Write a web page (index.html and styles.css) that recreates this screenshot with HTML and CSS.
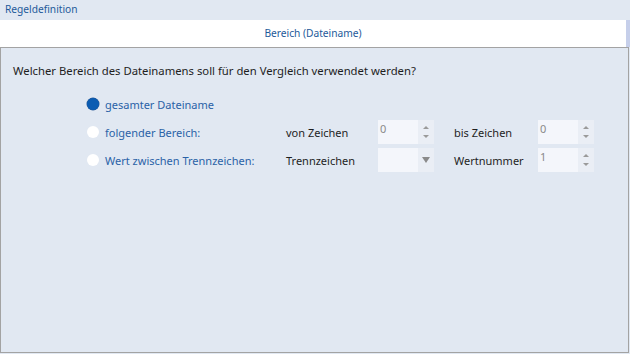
FILE: index.html
```html
<!DOCTYPE html>
<html lang="de">
<head>
  <meta charset="UTF-8">
  <title>Regeldefinition</title>
  <link rel="stylesheet" href="styles.css">
</head>
<body>
  <div class="window">
    <!-- Header -->
    <div class="header">Regeldefinition</div>

    <!-- Tab bar -->
    <div class="tab-bar">
      <div class="tab">Bereich (Dateiname)</div>
      <div class="tab-strip"></div>
    </div>

    <!-- Panel -->
    <div class="panel">
      <p class="question">Welcher Bereich des Dateinamens soll für den Vergleich verwendet werden?</p>

      <div class="options">
        <label class="option">
          <span class="radio checked"></span>
          gesamter Dateiname
        </label>
        <span></span><span></span><span></span><span></span>

        <label class="option">
          <span class="radio"></span>
          folgender Bereich:
        </label>
        <span class="field-label">von Zeichen</span>
        <div class="spinner">
          <span class="value">0</span>
          <span class="spin-buttons"><span class="arrow-up"></span><span class="arrow-down"></span></span>
        </div>
        <span class="field-label">bis Zeichen</span>
        <div class="spinner">
          <span class="value">0</span>
          <span class="spin-buttons"><span class="arrow-up"></span><span class="arrow-down"></span></span>
        </div>

        <label class="option">
          <span class="radio"></span>
          Wert zwischen Trennzeichen:
        </label>
        <span class="field-label">Trennzeichen</span>
        <div class="spinner">
          <span class="value"></span>
          <span class="combo-button"><span class="arrow-combo"></span></span>
        </div>
        <span class="field-label">Wertnummer</span>
        <div class="spinner">
          <span class="value">1</span>
          <span class="spin-buttons"><span class="arrow-up"></span><span class="arrow-down"></span></span>
        </div>
      </div>
    </div>
  </div>
</body>
</html>
```

FILE: styles.css
```css
* {
  box-sizing: border-box;
  margin: 0;
  padding: 0;
}

body {
  font-family: 'Noto Sans', 'Open Sans', sans-serif;
  font-size: 11px;
  background-color: #e1e8f2;
  color: #1e1e1e;
  width: 630px;
  height: 354px;
  overflow: hidden;
}

.window {
  display: flex;
  flex-direction: column;
  height: 354px;
}

.header {
  height: 20px;
  line-height: 19px;
  padding-left: 5px;
  font-size: 10.2px;
  color: #1e5a9a;
}

.tab-bar {
  display: flex;
  height: 27px;
}

.tab {
  flex: 1;
  background-color: #ffffff;
  text-align: center;
  line-height: 27px;
  font-size: 10.2px;
  color: #1e5a9a;
}

.tab-strip {
  width: 4px;
  background-color: #c6cfea;
}

.panel {
  width: 629px;
  height: 306px;
  border: 1px solid #a3a3a3;
  background-color: #e1e8f2;
  padding: 15px 0 0 12px;
}

.question {
  font-size: 11.3px;
  line-height: 16px;
  margin-bottom: 13px;
}

.options {
  display: grid;
  grid-template-columns: 199px 92px 76px 84px 56px;
  grid-auto-rows: 24px;
  row-gap: 4px;
  margin-left: 74px;
  align-items: center;
}

.option {
  display: flex;
  align-items: center;
  gap: 6px;
  color: #2a62a7;
}

.radio {
  width: 12px;
  height: 12px;
  border-radius: 50%;
  background-color: #ffffff;
}

.radio.checked {
  background-color: #0b5cb2;
  box-shadow: 0 0 0 0.5px #2a5a95;
}

.field-label {
  color: #1e1e1e;
}

.spinner {
  display: flex;
  width: 56px;
  height: 24px;
  background-color: #f4f6fb;
}

.spinner .value {
  flex: 1;
  padding: 1px 0 0 2px;
  color: #8a8a8a;
  line-height: 16px;
}

.spin-buttons,
.combo-button {
  width: 16px;
  background-color: #eaeef5;
  display: flex;
  flex-direction: column;
  align-items: center;
  justify-content: center;
  gap: 6px;
}

.arrow-up,
.arrow-down,
.arrow-combo {
  width: 0;
  height: 0;
  border-left: 3px solid transparent;
  border-right: 3px solid transparent;
}

.arrow-up {
  border-bottom: 3px solid #9a9a9a;
}

.arrow-down {
  border-top: 3px solid #9a9a9a;
}

.arrow-combo {
  border-left-width: 4px;
  border-right-width: 4px;
  border-top: 6px solid #8a8a8a;
}
```
